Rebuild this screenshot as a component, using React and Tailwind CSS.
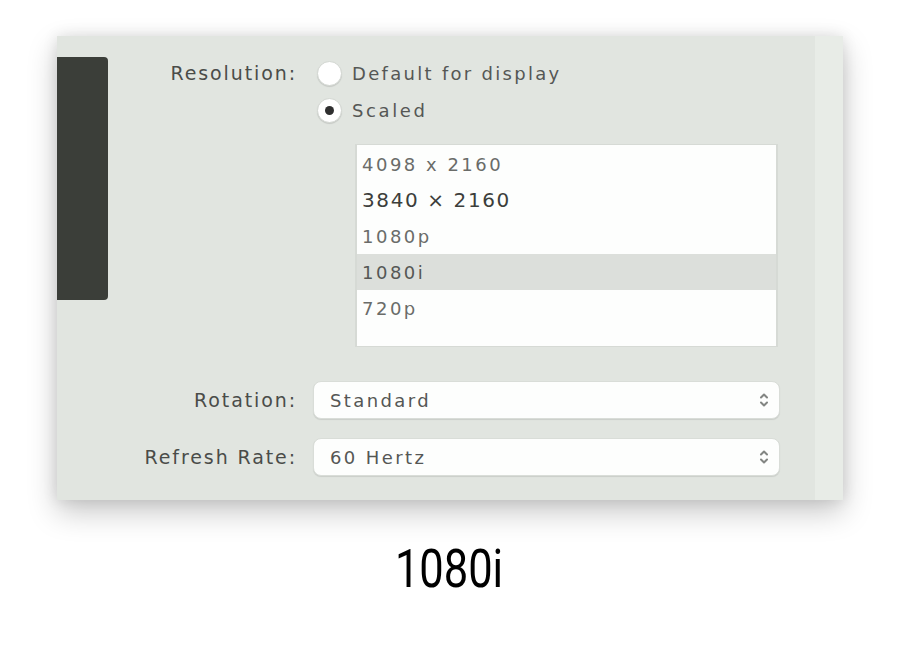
import React from 'react'

const resolutions = [
  { label: '4098 x 2160' },
  { label: '3840 × 2160', strong: true },
  { label: '1080p' },
  { label: '1080i', selected: true },
  { label: '720p' },
]

function Radio({ checked }) {
  return (
    <span className="w-[25px] h-[25px] rounded-full bg-white border border-[#d3d7d2] shadow-[0_1px_1px_rgba(0,0,0,0.12)] flex items-center justify-center shrink-0">
      {checked && <span className="w-[9px] h-[9px] rounded-full bg-[#2f2f2f]" />}
    </span>
  )
}

function Stepper() {
  return (
    <svg width="12" height="18" viewBox="0 0 12 18" className="shrink-0">
      <path d="M3 6.5 L6 3.5 L9 6.5" fill="none" stroke="#838683" strokeWidth="2" strokeLinecap="round" strokeLinejoin="round" />
      <path d="M3 11.5 L6 14.5 L9 11.5" fill="none" stroke="#838683" strokeWidth="2" strokeLinecap="round" strokeLinejoin="round" />
    </svg>
  )
}

function SelectBox({ value }) {
  return (
    <div className="w-[467px] h-[38px] bg-[#fdfefd] rounded-[8px] border border-[#d9ddd8] shadow-[0_1px_1px_rgba(0,0,0,0.1)] flex items-center justify-between pl-[16px] pr-[9px]">
      <span className="text-[18px] text-[#555755] tracking-[2.4px]">{value}</span>
      <Stepper />
    </div>
  )
}

export default function App() {
  return (
    <div className="w-[906px] h-[648px] bg-white overflow-hidden" style={{ fontFamily: '"DejaVu Sans", sans-serif' }}>
      <div className="mt-[36px] ml-[57px] w-[786px] h-[464px] bg-[#e1e5e0] flex shadow-[0_12px_28px_rgba(0,0,0,0.22),0_0_14px_rgba(0,0,0,0.1)]">
        {/* dark preview block */}
        <div className="w-[51px] h-[243px] mt-[21px] bg-[#3b3e39] rounded-r-[4px] shrink-0" />

        <div className="flex-1 flex flex-col">
          {/* Resolution */}
          <div className="flex mt-[24px]">
            <div className="w-[189px] text-right text-[19px] text-[#4a4c49] tracking-[1.9px] leading-[24px] pt-[1px]">Resolution:</div>
            <div className="ml-[20px] flex flex-col">
              <div className="flex items-center gap-[10px] h-[26px]">
                <Radio />
                <span className="text-[18px] text-[#555755] tracking-[2.3px]">Default for display</span>
              </div>
              <div className="flex items-center gap-[10px] h-[26px] mt-[11px]">
                <Radio checked />
                <span className="text-[18px] text-[#555755] tracking-[2.6px]">Scaled</span>
              </div>
            </div>
          </div>

          {/* resolution list */}
          <div className="ml-[247px] mt-[21px] w-[423px] h-[203px] bg-[#fdfefd] border-x-2 border-y border-[#d6dad5] pt-[1px]">
            {resolutions.map((r) => (
              <div
                key={r.label}
                className={`h-[36px] flex items-center pl-[5px] ${r.selected ? 'bg-[#dcdfdb] text-[#555755]' : 'text-[#6a6c69]'} ${r.strong ? 'text-[20px] tracking-[1.6px] !text-[#3c3e3b]' : 'text-[18px] tracking-[2.5px]'}`}
              >
                {r.label}
              </div>
            ))}
          </div>

          {/* Rotation */}
          <div className="flex items-center mt-[34px]">
            <div className="w-[189px] text-right text-[19px] text-[#4a4c49] tracking-[1.9px]">Rotation:</div>
            <div className="ml-[16px]">
              <SelectBox value="Standard" />
            </div>
          </div>

          {/* Refresh rate */}
          <div className="flex items-center mt-[19px]">
            <div className="w-[189px] text-right text-[19px] text-[#4a4c49] tracking-[1.9px]">Refresh Rate:</div>
            <div className="ml-[16px]">
              <SelectBox value="60 Hertz" />
            </div>
          </div>
        </div>

        {/* right strip */}
        <div className="w-[28px] bg-[#e8ece7] shrink-0" />
      </div>

      <div className="mt-[43px] flex justify-center">
        <div className="text-[53px] leading-none text-black scale-x-[0.82] -translate-x-[4px]" style={{ fontFamily: 'Roboto, sans-serif' }}>1080i</div>
      </div>
    </div>
  )
}
